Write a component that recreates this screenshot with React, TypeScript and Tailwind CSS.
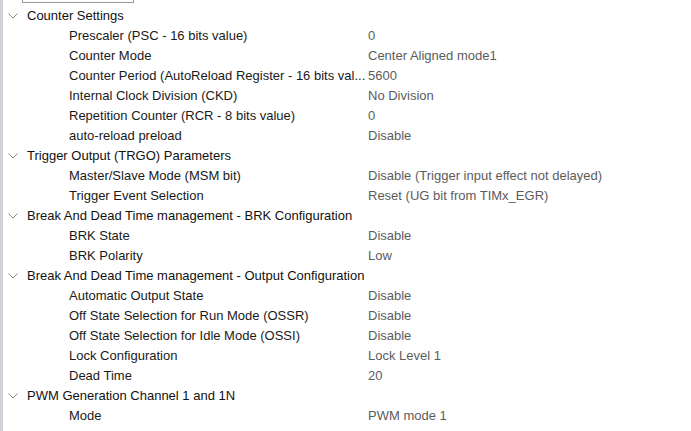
import React from "react";

type Row = { label: string; value: string };
type Section = { title: string; rows: Row[] };

const sections: Section[] = [
  {
    title: "Counter Settings",
    rows: [
      { label: "Prescaler (PSC - 16 bits value)", value: "0" },
      { label: "Counter Mode", value: "Center Aligned mode1" },
      { label: "Counter Period (AutoReload Register - 16 bits val...", value: "5600" },
      { label: "Internal Clock Division (CKD)", value: "No Division" },
      { label: "Repetition Counter (RCR - 8 bits value)", value: "0" },
      { label: "auto-reload preload", value: "Disable" },
    ],
  },
  {
    title: "Trigger Output (TRGO) Parameters",
    rows: [
      { label: "Master/Slave Mode (MSM bit)", value: "Disable (Trigger input effect not delayed)" },
      { label: "Trigger Event Selection", value: "Reset (UG bit from TIMx_EGR)" },
    ],
  },
  {
    title: "Break And Dead Time management - BRK Configuration",
    rows: [
      { label: "BRK State", value: "Disable" },
      { label: "BRK Polarity", value: "Low" },
    ],
  },
  {
    title: "Break And Dead Time management - Output Configuration",
    rows: [
      { label: "Automatic Output State", value: "Disable" },
      { label: "Off State Selection for Run Mode (OSSR)", value: "Disable" },
      { label: "Off State Selection for Idle Mode (OSSI)", value: "Disable" },
      { label: "Lock Configuration", value: "Lock Level 1" },
      { label: "Dead Time", value: "20" },
    ],
  },
  {
    title: "PWM Generation Channel 1 and 1N",
    rows: [
      { label: "Mode", value: "PWM mode 1" },
      { label: "Pulse (16 bits value)", value: "0" },
    ],
  },
];

function Chevron() {
  return (
    <svg width="10" height="6" viewBox="0 0 10 6" className="shrink-0">
      <path d="M0.5 0.5 L5 5 L9.5 0.5" fill="none" stroke="#8a8a8a" strokeWidth="1" />
    </svg>
  );
}

export default function App() {
  return (
    <div
      className="w-[691px] h-[431px] overflow-hidden bg-white flex"
      style={{ fontFamily: '"Liberation Sans", Arial, sans-serif' }}
    >
      <div className="w-[3px] shrink-0 bg-[#cfd3d8]" />
      <div className="flex-1 flex flex-col">
        <div className="ml-[19px] w-[112px] h-[3px] border-x border-b border-[#9a9a9a] shrink-0" />
        <div className="mt-[3px] flex flex-col text-[13px]">
          {sections.map((s) => (
            <div key={s.title} className="flex flex-col">
              <div className="h-[20px] flex items-center pl-[5px] gap-[9px] text-[#111]">
                <Chevron />
                <span className="whitespace-nowrap">{s.title}</span>
              </div>
              {s.rows.map((r) => (
                <div key={r.label} className="h-[20px] flex items-center">
                  <span className="pl-[66px] w-[365px] shrink-0 whitespace-nowrap overflow-hidden text-[#1a1a1a]">
                    {r.label}
                  </span>
                  <span className="whitespace-nowrap text-[#5c5c5c]">{r.value}</span>
                </div>
              ))}
            </div>
          ))}
        </div>
      </div>
    </div>
  );
}
